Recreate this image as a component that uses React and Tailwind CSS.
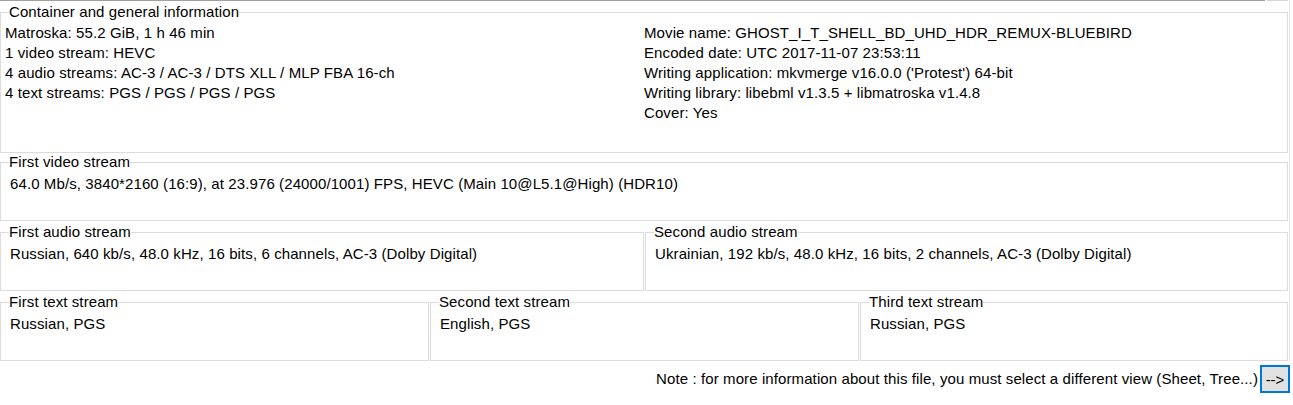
import React from "react";

function Group({ title, className, bodyClass, children }) {
  return (
    <fieldset className={`min-w-0 border border-[#dcdcdc] ${className}`}>
      <legend className="ml-2 px-0 leading-4">{title}</legend>
      <div className={bodyClass}>{children}</div>
    </fieldset>
  );
}

const general = [
  "Matroska: 55.2 GiB, 1 h 46 min",
  "1 video stream: HEVC",
  "4 audio streams: AC-3 / AC-3 / DTS XLL / MLP FBA 16-ch",
  "4 text streams: PGS / PGS / PGS / PGS",
];

const meta = [
  "Movie name: GHOST_I_T_SHELL_BD_UHD_HDR_REMUX-BLUEBIRD",
  "Encoded date: UTC 2017-11-07 23:53:11",
  "Writing application: mkvmerge v16.0.0 ('Protest') 64-bit",
  "Writing library: libebml v1.3.5 + libmatroska v1.4.8",
  "Cover: Yes",
];

const texts = [
  { title: "First text stream", value: "Russian, PGS", w: "w-[429px]" },
  { title: "Second text stream", value: "English, PGS", w: "w-[429px]" },
  { title: "Third text stream", value: "Russian, PGS", w: "w-[428px]" },
];

export default function App() {
  return (
    <div className="w-[1293px] h-[405px] overflow-hidden bg-white text-black text-[15px] tracking-[0.1px] font-['Liberation_Sans',Arial,sans-serif] flex flex-col">
      {/* top edge */}
      <div className="flex h-[1px] shrink-0">
        <div className="w-[1265px] bg-[#a0a0a0]" />
        <div className="w-[2px]" />
        <div className="w-[21px] bg-[#d4d4d4]" />
      </div>

      <div className="w-[1290px] border-r border-[#e6e6e6] pr-[1px] flex flex-col">
        {/* Container */}
        <Group
          title="Container and general information"
          className="mt-[3px] h-[149px]"
          bodyClass="flex pt-[3px] pl-[4px] leading-5"
        >
          <div className="w-[639px] flex flex-col">
            {general.map((l) => (
              <div key={l}>{l}</div>
            ))}
          </div>
          <div className="flex flex-col">
            {meta.map((l) => (
              <div key={l}>{l}</div>
            ))}
          </div>
        </Group>

        {/* Video */}
        <Group
          title="First video stream"
          className="mt-[1px] h-[67px]"
          bodyClass="pt-[4px] pl-[9px] leading-5"
        >
          64.0 Mb/s, 3840*2160 (16:9), at 23.976 (24000/1001) FPS, HEVC (Main 10@L5.1@High) (HDR10)
        </Group>

        {/* Audio */}
        <div className="flex gap-[1px] mt-[3px]">
          <Group
            title="First audio stream"
            className="w-[644px] h-[67px]"
            bodyClass="pt-[4px] pl-[9px] leading-5"
          >
            Russian, 640 kb/s, 48.0 kHz, 16 bits, 6 channels, AC-3 (Dolby Digital)
          </Group>
          <Group
            title="Second audio stream"
            className="w-[643px] h-[67px]"
            bodyClass="pt-[4px] pl-[9px] leading-5"
          >
            Ukrainian, 192 kb/s, 48.0 kHz, 16 bits, 2 channels, AC-3 (Dolby Digital)
          </Group>
        </div>

        {/* Text */}
        <div className="flex gap-[1px] mt-[3px]">
          {texts.map((t) => (
            <Group
              key={t.title}
              title={t.title}
              className={`${t.w} h-[67px]`}
              bodyClass="pt-[4px] pl-[9px] leading-5"
            >
              {t.value}
            </Group>
          ))}
        </div>
      </div>

      {/* Note */}
      <div className="w-[1290px] flex justify-end items-center gap-[2px] mt-[4px]">
        <span className="leading-5">
          Note : for more information about this file, you must select a different view (Sheet, Tree...)
        </span>
        <button className="w-[30px] h-[28px] border-2 border-[#0078d7] bg-[#e1e1e1] flex items-center justify-center leading-none tracking-normal">
          --&gt;
        </button>
      </div>
    </div>
  );
}
